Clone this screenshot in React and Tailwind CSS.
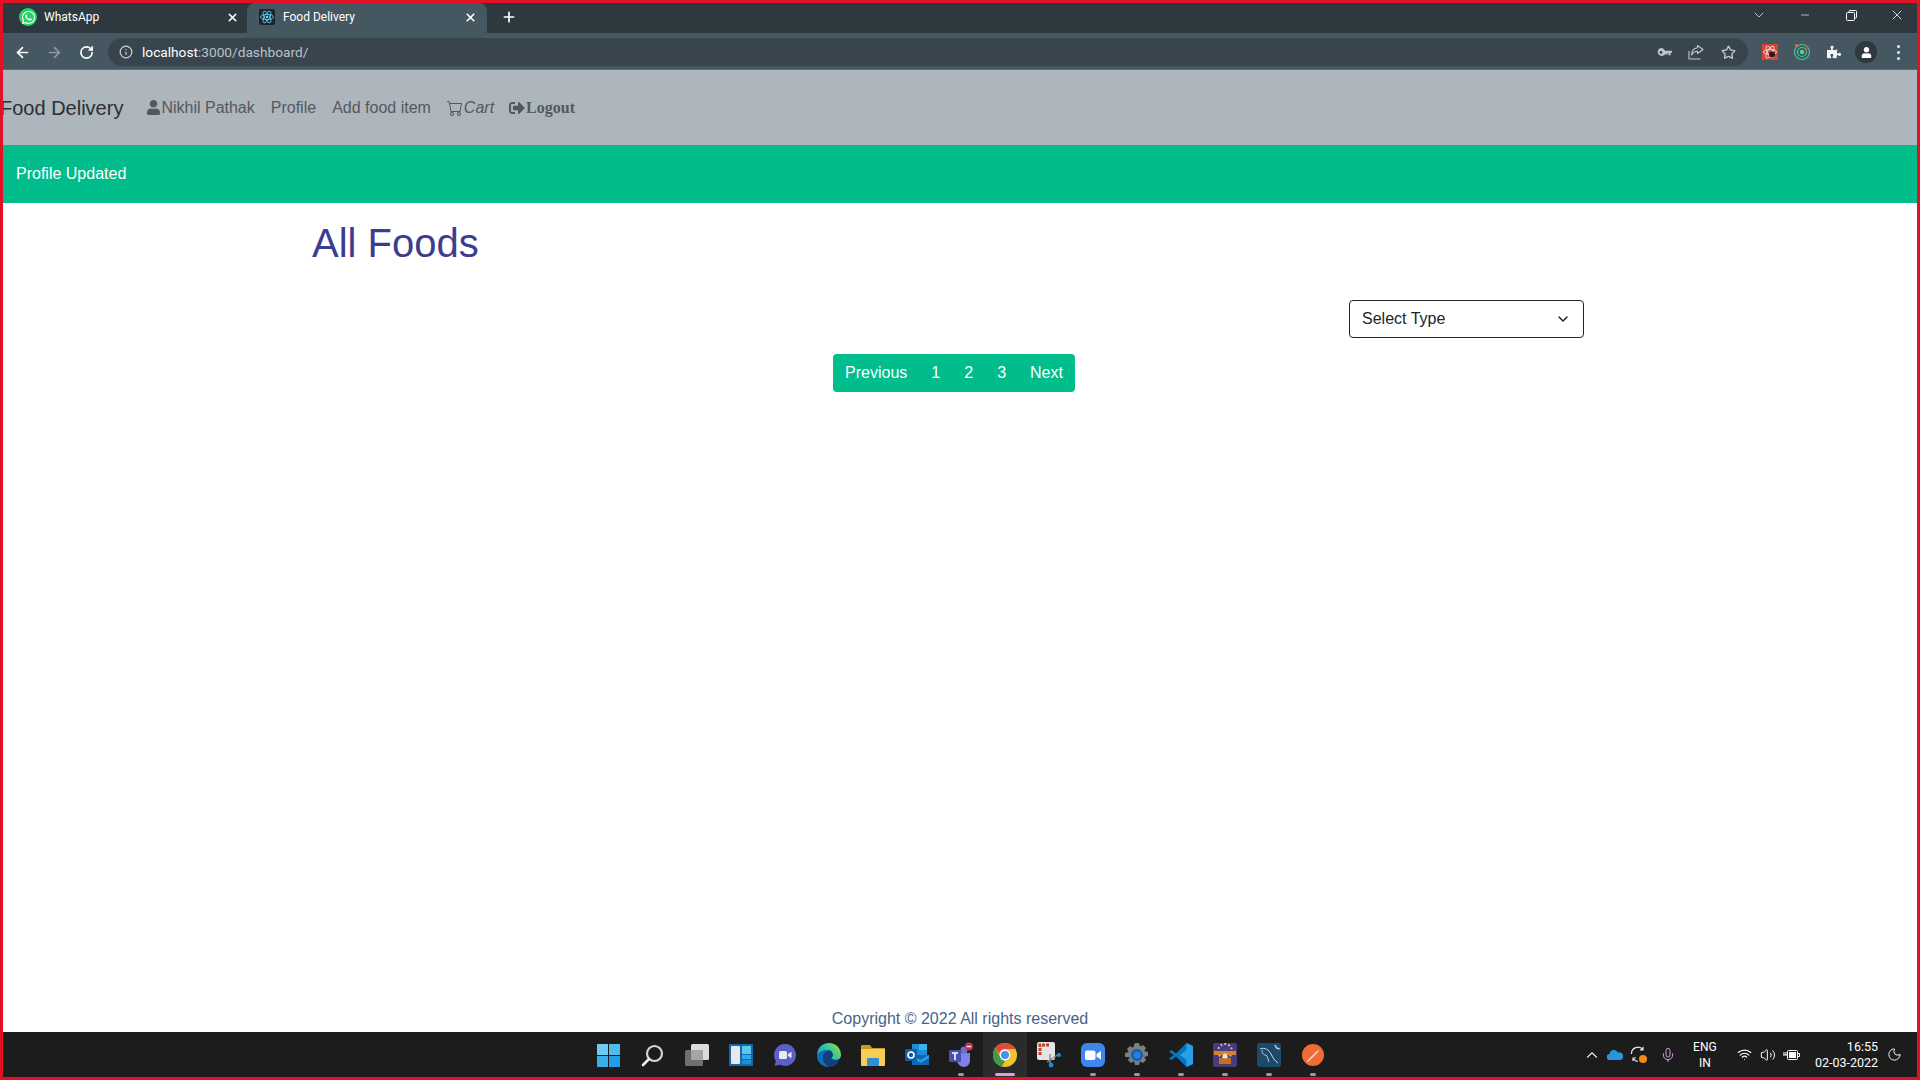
import React from 'react';
import { FaUser, FaSignOutAlt, FaPuzzlePiece, FaWhatsapp } from 'react-icons/fa';
import { BsCart } from 'react-icons/bs';
import { ArrowLeft, ArrowRight, RotateCw, Info, Star, X, Plus, ChevronDown, ChevronUp, Minus, Mic, Wifi, Volume2, Moon } from 'lucide-react';

const sans = 'font-["Liberation_Sans",Arial,sans-serif]';

const ReactLogo = () => (
    <svg width="16" height="16" viewBox="0 0 16 16" className="shrink-0">
        <rect width="16" height="16" rx="2" fill="#20232a" />
        <g fill="none" stroke="#61dafb" strokeWidth="0.8">
            <ellipse cx="8" cy="8" rx="6.5" ry="2.6" />
            <ellipse cx="8" cy="8" rx="6.5" ry="2.6" transform="rotate(60 8 8)" />
            <ellipse cx="8" cy="8" rx="6.5" ry="2.6" transform="rotate(120 8 8)" />
        </g>
        <circle cx="8" cy="8" r="1.3" fill="#61dafb" />
    </svg>
);

const Restore = () => (
    <svg width="11" height="11" viewBox="0 0 11 11" fill="none" stroke="#fff" strokeWidth="1">
        <rect x="0.5" y="2.5" width="8" height="8" rx="1" />
        <path d="M3 2.5V1.5a1 1 0 0 1 1-1h5.5a1 1 0 0 1 1 1V7a1 1 0 0 1-1 1h-1" />
    </svg>
);

const TabBar = () => (
    <div className="flex h-[30px] shrink-0 items-stretch bg-[#2d383f] font-['Roboto',sans-serif] text-xs text-white">
        <div className="flex w-[244px] items-center pb-[2px] pl-[16px] pr-[8px]">
            <span className="flex h-[18px] w-[18px] items-center justify-center rounded-full bg-[#25d366]">
                <FaWhatsapp size={15} color="#fff" />
            </span>
            <span className="ml-[7px] flex-1">WhatsApp</span>
            <X size={13} strokeWidth={3} />
        </div>
        <div className="flex w-[240px] items-center rounded-t-lg bg-[#455761] pb-[2px] pl-[12px] pr-[10px]">
            <ReactLogo />
            <span className="ml-[8px] flex-1">Food Delivery</span>
            <X size={13} strokeWidth={3} />
        </div>
        <div className="ml-[14px] flex items-center pb-[2px]">
            <Plus size={16} strokeWidth={2.5} />
        </div>
        <div className="-mr-[3px] ml-auto flex items-center pb-[6px]">
            <span className="flex w-[46px] justify-center"><ChevronDown size={16} color="#dfe3e5" strokeWidth={1.2} /></span>
            <span className="flex w-[46px] justify-center"><Minus size={12} strokeWidth={1.3} /></span>
            <span className="flex w-[46px] justify-center"><Restore /></span>
            <span className="flex w-[46px] justify-center"><X size={16} strokeWidth={1.2} /></span>
        </div>
    </div>
);

const RadarIcon = () => (
    <svg width="18" height="18" viewBox="0 0 18 18" fill="none">
        <circle cx="9" cy="9" r="7.5" stroke="#3fc79a" strokeWidth="1.2" />
        <circle cx="9" cy="9" r="4.5" stroke="#3fc79a" strokeWidth="1.2" />
        <circle cx="9" cy="9" r="2.2" fill="#45d9a4" />
        <circle cx="3.5" cy="2.5" r="1.5" fill="#e8702a" />
        <circle cx="14" cy="5" r="1.5" fill="#e0452c" />
    </svg>
);

const ReactDevIcon = () => (
    <svg width="16" height="16" viewBox="0 0 16 16">
        <rect width="16" height="16" fill="#d0453a" />
        <g fill="none" stroke="#f5d5d0" strokeWidth="0.9">
            <ellipse cx="8" cy="8" rx="6.5" ry="2.6" />
            <ellipse cx="8" cy="8" rx="6.5" ry="2.6" transform="rotate(60 8 8)" />
            <ellipse cx="8" cy="8" rx="6.5" ry="2.6" transform="rotate(120 8 8)" />
        </g>
        <circle cx="10" cy="10.5" r="3" fill="#2a1a1a" />
    </svg>
);

const KeyIcon = () => (
    <svg width="15" height="9" viewBox="0 0 15 9" fill="#c2c8cb">
        <path fillRule="evenodd" d="M4 0a4 4 0 0 1 3.800 2.800H15v2h-1.500v2.500h-2V4.800h-1v1.700h-2V5.400A4 4 0 1 1 4 0zm0 2.700a1.500 1.500 0 1 0 0 3 1.500 1.500 0 0 0 0-3z" />
    </svg>
);

const ShareIcon = () => (
    <svg width="16" height="16" viewBox="0 0 16 16" fill="none" stroke="#c2c8cb" strokeWidth="1.100">
        <path d="M1 7v8h11.500" />
        <path d="M9.500 1.500 15 5.500l-5.500 4V7.300C7 7.300 5 8.500 3.700 11c0-4 2-6.700 5.800-7.200z" strokeLinejoin="round" />
    </svg>
);

const ToolBar = () => (
    <div className="flex h-[37px] shrink-0 items-center border-b border-[#5c6b75] bg-[#455761] pt-[2px] font-['Roboto',sans-serif] text-white">
        <span className="mr-[3px] flex w-[32px] justify-center pl-[6px]"><ArrowLeft size={17} strokeWidth={2.4} /></span>
        <span className="flex w-[32px] justify-center"><ArrowRight size={17} strokeWidth={2.4} color="#8d99a0" /></span>
        <span className="flex w-[32px] justify-center"><RotateCw size={15} strokeWidth={2.6} /></span>
        <div className="ml-[6px] flex h-[28px] flex-1 items-center rounded-full bg-[#38454e] pl-[11px] pr-[4px]">
            <Info size={14} color="#cfd5d8" />
            <span className="ml-[9px] text-[13.7px] text-white">localhost<span className="text-[#b9c1c6]">:3000/dashboard/</span></span>
            <div className="ml-auto flex items-center">
                <span className="flex w-[32px] justify-center"><KeyIcon /></span>
                <span className="flex w-[32px] justify-center"><ShareIcon /></span>
                <span className="flex w-[32px] justify-center"><Star size={15} color="#c2c8cb" strokeWidth={2.2} /></span>
            </div>
        </div>
        <div className="ml-[6px] flex items-center pr-[3px]">
            <span className="flex w-[32px] justify-center"><ReactDevIcon /></span>
            <span className="flex w-[32px] justify-center"><RadarIcon /></span>
            <span className="flex w-[32px] justify-center"><FaPuzzlePiece size={14} color="#f4f6f7" /></span>
            <span className="flex w-[32px] justify-center">
                <span className="flex h-[22px] w-[22px] items-center justify-center rounded-full bg-[#2d383f]"><FaUser size={11} color="#fff" /></span>
            </span>
            <span className="flex w-[32px] flex-col items-center gap-[3px]">
                <i className="h-[3px] w-[3px] rounded-full bg-[#e8ebec]" />
                <i className="h-[3px] w-[3px] rounded-full bg-[#e8ebec]" />
                <i className="h-[3px] w-[3px] rounded-full bg-[#e8ebec]" />
            </span>
        </div>
    </div>
);

const NavBar = () => (
    <nav className={`flex h-[75px] shrink-0 items-center bg-[#adb5bd] text-base text-[#55595d] ${sans}`}>
        <span className="-ml-[3px] text-xl text-[#2b2f33]">Food Delivery</span>
        <span className="ml-[23px] flex items-center"><FaUser size={15} /> Nikhil Pathak</span>
        <span className="ml-[16px]">Profile</span>
        <span className="ml-[16px]">Add food item</span>
        <span className="ml-[16px] flex items-center italic"><BsCart size={16} className="mr-[1px]" />Cart</span>
        <span className="ml-[15px] flex items-center font-['Liberation_Serif',serif] text-base font-bold"><FaSignOutAlt size={16} className="mr-[1px]" />Logout</span>
    </nav>
);

const WinLogo = () => (
    <svg width="23" height="23" viewBox="0 0 23 23">
        <rect width="11" height="11" fill="#6ccbf0" />
        <rect x="12" width="11" height="11" fill="#4fbcee" />
        <rect y="12" width="11" height="11" fill="#38aeeb" />
        <rect x="12" y="12" width="11" height="11" fill="#1f9fe8" />
    </svg>
);

const SearchIcon = () => (
    <svg width="23" height="23" viewBox="0 0 23 23" fill="none">
        <circle cx="13.5" cy="9.5" r="7.5" stroke="#d5d5d5" strokeWidth="2.2" />
        <path d="M8 15 2 21" stroke="#f0f0f0" strokeWidth="2.6" strokeLinecap="round" />
    </svg>
);

const TaskView = () => (
    <svg width="24" height="22" viewBox="0 0 24 22">
        <rect x="6" y="0" width="18" height="16" rx="1.5" fill="#dcdcdc" />
        <rect x="0" y="6" width="18" height="16" rx="1.5" fill="#6f6f6f" />
        <rect x="6" y="6" width="12" height="10" fill="#a4a4a4" />
    </svg>
);

const Widgets = () => (
    <svg width="24" height="22" viewBox="0 0 24 22">
        <rect width="24" height="22" rx="1" fill="#1668ae" />
        <rect x="2" y="2" width="9" height="18" rx="1" fill="#e8e8ee" />
        <rect x="13" y="2" width="9" height="8" fill="#5cc8ef" />
        <rect x="13" y="11" width="9" height="4" fill="#34a9e6" />
        <rect x="13" y="16" width="9" height="4" fill="#1a8fdc" />
    </svg>
);

const ChatIcon = () => (
    <svg width="24" height="24" viewBox="0 0 24 24">
        <path d="M12 1a11 11 0 1 1-5 20.8L1.5 23l1.3-5A11 11 0 0 1 12 1z" fill="#5b5fc7" />
        <rect x="6" y="8" width="8" height="8" rx="1.5" fill="#ece8f8" />
        <path d="m15 11 3.5-2.2v6.4L15 13z" fill="#ece8f8" />
    </svg>
);

const EdgeIcon = () => (
    <svg width="24" height="24" viewBox="0 0 24 24">
        <defs>
            <linearGradient id="edgeTop" x1="0" y1="1" x2="1" y2="0.4">
                <stop offset="0" stopColor="#1595c9" />
                <stop offset="0.6" stopColor="#2fc3a6" />
                <stop offset="1" stopColor="#82dc52" />
            </linearGradient>
        </defs>
        <path d="M12 0c7 0 12 5 12 12 0 3-2 5-5.500 5-2.500 0-4-1-4.500-2 1.500-1 2-2.500 1.500-4.500C15 8 12.500 7 10 7 6 7 2 9.500 0 13 0 5 5 0 12 0z" fill="url(#edgeTop)" />
        <path d="M0 13c2-3.500 6-6 10-6 2 0 3.500.6 4.500 1.600C10 7.500 6 10 6 14.500c0 4 3 7.500 7 9.500C6 24.500 0 19.500 0 13z" fill="#0c6fbe" />
        <path d="M6 14.500C6 10 10 7.500 14.500 8.600c1.300 1.400 1.500 4.400-.5 6.400.5 1 2 2 4.500 2 2 0 3.500-.6 4.500-1.700C21.500 20.500 17.500 24 13 24c-4-2-7-5.500-7-9.500z" fill="#123f7a" />
    </svg>
);

const FolderIcon = () => (
    <svg width="24" height="22" viewBox="0 0 24 22">
        <path d="M0 2a1 1 0 0 1 1-1h8l2 3h13v3H0z" fill="#c99a1e" />
        <rect y="5" width="24" height="17" rx="1" fill="#f6cd55" />
        <rect x="6" y="14" width="12" height="8" rx="1" fill="#2f8fd0" />
    </svg>
);

const OutlookIcon = () => (
    <svg width="24" height="24" viewBox="0 0 24 24">
        <rect x="7" y="1" width="15" height="12" fill="#1f8ad8" />
        <rect x="14" y="1" width="8" height="6" fill="#37b4ec" />
        <path d="M7 12h17v10H7z" fill="#0f66b3" />
        <path d="m7 12 8.5 5L24 12v3l-8.500 5L7 15z" fill="#2a9be0" />
        <rect y="6" width="12" height="12" rx="1" fill="#0f5ea8" />
        <circle cx="6" cy="12" r="3" fill="none" stroke="#fff" strokeWidth="1.6" />
    </svg>
);

const TeamsIcon = () => (
    <svg width="26" height="26" viewBox="0 0 26 26">
        <circle cx="16" cy="8" r="3.5" fill="#6f6fd0" />
        <path d="M8 11h14v8a6 6 0 0 1-6 6 7 7 0 0 1-7-6z" fill="#7b83eb" />
        <rect x="1" y="8" width="12" height="12" rx="1" fill="#4b50b0" />
        <path d="M4 11h6M7 11v7" stroke="#fff" strokeWidth="1.6" />
        <circle cx="21" cy="4.500" r="4" fill="#c4314b" />
        <rect x="18.800" y="3.800" width="4.400" height="1.400" fill="#fff" />
    </svg>
);

const ChromeIcon = () => (
    <svg width="24" height="24" viewBox="0 0 24 24">
        <circle cx="12" cy="12" r="12" fill="#f2c22d" />
        <path d="M12 0a12 12 0 0 1 10.400 6H12a6 6 0 0 0-5.800 4.400L2 5a12 12 0 0 1 10-5z" fill="#dd4b3e" />
        <path d="M2 5l5 8.500a6 6 0 0 0 5 4.500L9 23.600A12 12 0 0 1 2 5z" fill="#3f9b4a" />
        <circle cx="12" cy="12" r="5.400" fill="#fff" />
        <circle cx="12" cy="12" r="4" fill="#4a8ef0" />
    </svg>
);

const SnipIcon = () => (
    <svg width="24" height="26" viewBox="0 0 24 26">
        <rect x="0" y="0" width="18" height="18" rx="2" fill="#e4e4e4" />
        <path d="M3 13V3h10" fill="none" stroke="#c9402f" strokeWidth="3" strokeDasharray="3 1" />
        <path d="M10 20 22 12M13 12v10" stroke="#8a8a8a" strokeWidth="1.400" />
        <circle cx="22" cy="13" r="2" fill="#1c8ed8" />
        <circle cx="14" cy="23" r="2.400" fill="#1c8ed8" />
    </svg>
);

const ZoomIcon = () => (
    <svg width="24" height="24" viewBox="0 0 24 24">
        <rect width="24" height="24" rx="6" fill="#3f86ee" />
        <rect x="4" y="7.500" width="10.500" height="9.500" rx="2" fill="#fff" />
        <path d="m15.500 11 4.500-3v8.500l-4.500-3z" fill="#fff" />
    </svg>
);

const GearIcon = () => (
    <svg width="24" height="24" viewBox="0 0 24 24">
        <path d="M10 0h4l1 3.600 3-1.700 3 3-1.700 3 3.700 1v4l-3.700 1 1.700 3-3 3-3-1.700-1 3.800h-4l-1-3.800-3 1.700-3-3 1.700-3L0 14v-4l3.700-1L2 6l3-3 3 1.700z" fill="#7c7f82" />
        <circle cx="12" cy="12" r="6" fill="#0f5fb4" />
        <circle cx="12" cy="12" r="3.500" fill="#2b80d6" />
    </svg>
);

const VsCodeIcon = () => (
    <svg width="24" height="24" viewBox="0 0 24 24">
        <path d="M17.500 0 24 3v18l-6.500 3L7 13.500 2.500 17 0 15.500 4.500 12 0 8.500 2.500 7 7 10.500z" fill="#0a74c4" />
        <path d="M17.500 0 24 3v18l-6.500 3V17L11 12l6.500-5z" fill="#2b9ee8" />
    </svg>
);

const JavaEeIcon = () => (
    <svg width="24" height="24" viewBox="0 0 24 24">
        <rect width="24" height="24" rx="2" fill="#4a3a78" />
        <circle cx="12" cy="8" r="7" fill="none" stroke="#b9b9c4" strokeWidth="2" strokeDasharray="2 2" />
        <rect x="1" y="8" width="22" height="4" fill="#d9812a" />
        <rect x="6" y="15" width="12" height="6" fill="#c66f1f" />
        <circle cx="12" cy="13" r="2.500" fill="#e6e6e6" />
    </svg>
);

const MysqlIcon = () => (
    <svg width="24" height="24" viewBox="0 0 24 24">
        <rect width="24" height="24" rx="3" fill="#1c4a6c" />
        <path d="M3 6c5-2 9 1 11 5s4 7 7 9M5 7c0 4 2 5 4 5 2 2 2 5 3 7" fill="none" stroke="#c9d7e0" strokeWidth="1" />
        <path d="m18 2 1.500 3 3 1" fill="none" stroke="#c9d7e0" strokeWidth="1.400" />
    </svg>
);

const PostmanIcon = () => (
    <svg width="22" height="22" viewBox="0 0 22 22">
        <circle cx="11" cy="11" r="11" fill="#ef6c37" />
        <path d="M5 17 15 7l2-1-1 2L6 18z" fill="#f7e0d5" />
    </svg>
);

const taskIcons = [
    { el: <WinLogo /> },
    { el: <SearchIcon /> },
    { el: <TaskView /> },
    { el: <Widgets /> },
    { el: <ChatIcon /> },
    { el: <EdgeIcon /> },
    { el: <FolderIcon /> },
    { el: <OutlookIcon /> },
    { el: <TeamsIcon />, dot: true },
    { el: <ChromeIcon />, active: true },
    { el: <SnipIcon /> },
    { el: <ZoomIcon />, dot: true },
    { el: <GearIcon />, dot: true },
    { el: <VsCodeIcon />, dot: true },
    { el: <JavaEeIcon />, dot: true },
    { el: <MysqlIcon />, dot: true },
    { el: <PostmanIcon />, dot: true },
];

const OneDrive = () => (
    <svg width="16" height="11" viewBox="0 0 16 11">
        <path d="M3 11a3 3 0 0 1-.5-6A4.500 4.500 0 0 1 11 3.500 3.800 3.800 0 0 1 16 8a3 3 0 0 1-3 3z" fill="#2b93d8" />
    </svg>
);

const SyncIcon = () => (
    <svg width="18" height="18" viewBox="0 0 18 18" fill="none" stroke="#e8e8e8" strokeWidth="1.200">
        <path d="M1.500 8A6.500 6.500 0 0 1 13 3.500M13 .8v3h-3M3 15v-3h3M3.500 13A6 6 0 0 0 8 15.500" />
        <circle cx="13" cy="13" r="4" fill="#f08c12" stroke="none" />
    </svg>
);

const BatteryIcon = () => (
    <svg width="17" height="12" viewBox="0 0 17 12" fill="none" stroke="#fff">
        <rect x="4.500" y="1.500" width="10" height="9" rx="1" />
        <rect x="6" y="3" width="7" height="6" fill="#fff" stroke="none" />
        <path d="M15 4.500h1.500v3H15M0 6h4M1 3v3M3 3v3" />
    </svg>
);

const Taskbar = () => (
    <div className="grid h-[45px] shrink-0 grid-cols-[1fr_auto_1fr] bg-[#1c1c1c] font-['Roboto',sans-serif] text-white">
        <div />
        <div className="flex pl-[1px]">
            {taskIcons.map((icon, i) => (
                <div key={i} className={`relative flex h-[45px] w-[44px] items-center justify-center pt-[1px] ${icon.active ? 'bg-[#2b2b2b]' : ''}`}>
                    {icon.el}
                    {icon.dot && <span className="absolute bottom-[1px] left-[19px] h-[3px] w-[6px] rounded-full bg-[#9a9a9a]" />}
                    {icon.active && <span className="absolute bottom-[1px] left-[12px] h-[3px] w-[20px] rounded-full bg-[#d9a0e0]" />}
                </div>
            ))}
        </div>
        <div className="flex items-center justify-end pr-[15px]">
            <ChevronUp size={18} color="#e8e8e8" strokeWidth={1.5} />
            <span className="ml-[6px]"><OneDrive /></span>
            <span className="ml-[7px]"><SyncIcon /></span>
            <span className="ml-[12px]"><Mic size={16} color="#c89fd0" strokeWidth={1.500} /></span>
            <span className="ml-[14px] w-[30px] text-center text-[12px] leading-[16px]">ENG<br />IN</span>
            <span className="ml-[17px]"><Wifi size={15} strokeWidth={1.800} /></span>
            <span className="ml-[8px]"><Volume2 size={16} strokeWidth={1.500} /></span>
            <span className="ml-[7px]"><BatteryIcon /></span>
            <span className="ml-[15px] text-right text-[12.5px] leading-[16px]">16:55<br />02-03-2022</span>
            <span className="ml-[9px]"><Moon size={15} strokeWidth={1.500} /></span>
        </div>
    </div>
);

const App = () => {
    return (
        <div className={`flex h-screen flex-col overflow-hidden border-[3px] border-[#e11126] bg-white ${sans}`}>
            <TabBar />
            <ToolBar />
            <NavBar />
            <div className="flex h-[58px] shrink-0 items-center bg-[#00bd8b] pl-[13px] text-base text-white">
                Profile Updated
            </div>

            <main className="flex flex-1 flex-col">
                <div className="mx-auto w-[1320px] px-[12px]">
                    <h1 className="pt-[16px] text-[40px] leading-[48px] text-[#3d3d90]">All Foods</h1>
                    <div className="mt-[33px] flex justify-end pr-[24px]">
                        <div className="flex h-[38px] w-[235px] items-center justify-between rounded border border-[#212529] pl-[12px] pr-[12px] text-base text-[#212529]">
                            Select Type
                            <ChevronDown size={16} strokeWidth={2.2} />
                        </div>
                    </div>
                    <div className="mt-[16px] flex justify-center pr-[12px]">
                        <div className="flex h-[38px] items-center rounded-sm bg-[#00bd8b] text-base text-white">
                            <span className="px-[12px]">Previous</span>
                            <span className="px-[12px]">1</span>
                            <span className="px-[12px]">2</span>
                            <span className="px-[12px]">3</span>
                            <span className="px-[12px]">Next</span>
                        </div>
                    </div>
                </div>
                <p className="mt-auto pb-[1px] text-center text-base leading-[24px] text-[#45648a]">Copyright © 2022 All rights reserved</p>
            </main>

            <Taskbar />
        </div>
    );
};

export default App;
